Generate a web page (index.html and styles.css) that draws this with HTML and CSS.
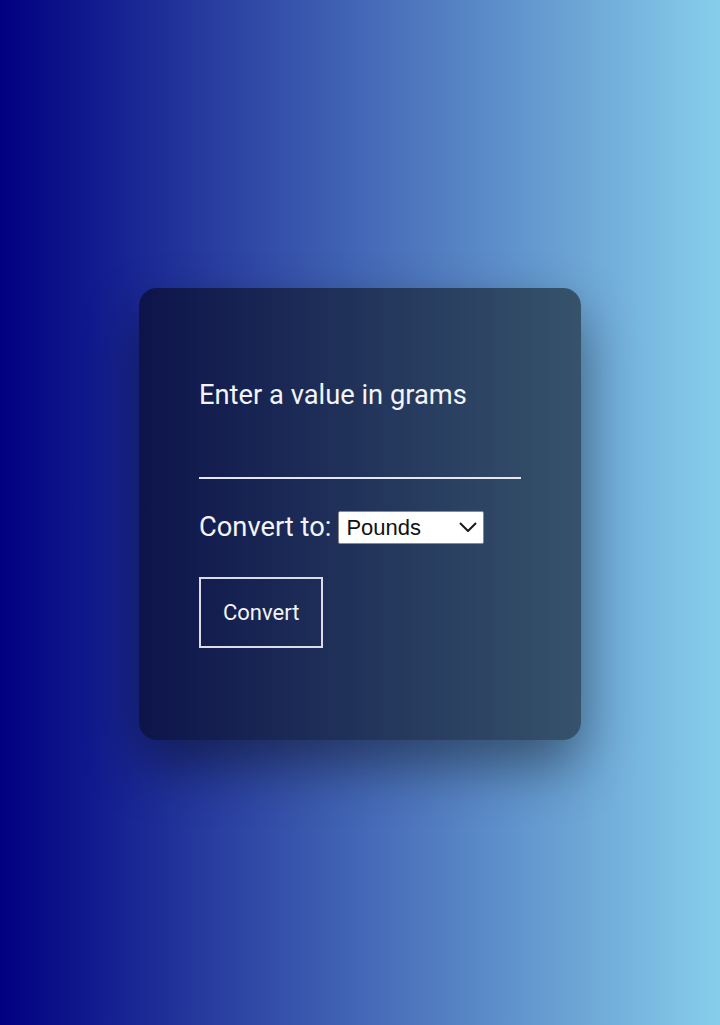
FILE: index.html
```html
<!DOCTYPE html>
<html lang="en">
<head>
<meta charset="utf-8">
<title>Grams Converter</title>
<link rel="stylesheet" href="styles.css">
</head>
<body>
  <main class="card">
    <label class="prompt" for="grams">Enter a value in grams</label>
    <input class="value-input" id="grams" type="text">
    <div class="convert-row">
      <span class="convert-label">Convert to:</span>
      <span class="select-wrap">
        <select class="unit-select">
          <option>Pounds</option>
          <option>Ounces</option>
          <option>Kilograms</option>
        </select>
        <svg class="chevron" width="18" height="11" viewBox="0 0 18 11" aria-hidden="true">
          <path d="M1.5 1.5 L9 9 L16.5 1.5" fill="none" stroke="#1a1a1a" stroke-width="2" stroke-linecap="round" stroke-linejoin="round"/>
        </svg>
      </span>
    </div>
    <div class="actions">
      <button class="convert-btn" type="button">Convert</button>
    </div>
  </main>
</body>
</html>
```

FILE: styles.css
```css
html, body {
  margin: 0;
  padding: 0;
}
body {
  width: 720px;
  height: 1025px;
  background: linear-gradient(to right, #000080, #87ceeb);
  display: flex;
  align-items: center;
  justify-content: center;
  font-family: Roboto, "Liberation Sans", sans-serif;
  color: #fff;
}
.card {
  box-sizing: border-box;
  width: 442px;
  padding: 92px 60px 92px 60px;
  border-radius: 18px;
  background: rgba(0, 0, 0, 0.5);
  box-shadow: 0 25px 55px rgba(0, 0, 0, 0.45);
  display: flex;
  flex-direction: column;
  margin-top: 2px;
}
.prompt {
  font-size: 27.3px;
  line-height: 31px;
  color: #f4f4f8;
}
.value-input {
  box-sizing: border-box;
  margin-top: 22px;
  width: 322px;
  height: 46px;
  background: transparent;
  border: none;
  border-bottom: 2px solid #e6e6ee;
  color: #fff;
  font-size: 22px;
  outline: none;
  padding: 0;
}
.convert-row {
  margin-top: 32px;
  display: flex;
  align-items: center;
  gap: 7px;
}
.convert-label {
  font-size: 27.3px;
  line-height: 33px;
  color: #f4f4f8;
}
.select-wrap {
  position: relative;
  display: flex;
}
.unit-select {
  box-sizing: border-box;
  width: 146px;
  height: 33px;
  padding: 0 0 0 7px;
  font-family: "Liberation Sans", Arial, sans-serif;
  font-size: 22px;
  color: #111;
  background: #fff;
  border: 1px solid #8a8a8a;
  border-radius: 2px;
  appearance: none;
  -webkit-appearance: none;
}
.chevron {
  position: absolute;
  right: 7px;
  top: 11px;
  pointer-events: none;
}
.actions {
  margin-top: 33px;
  display: flex;
}
.convert-btn {
  font-family: Roboto, "Liberation Sans", sans-serif;
  font-size: 22px;
  line-height: 25px;
  padding: 21px 22px;
  background: transparent;
  color: #f4f4f8;
  border: 2px solid #dcdce6;
  border-radius: 0;
}
```
